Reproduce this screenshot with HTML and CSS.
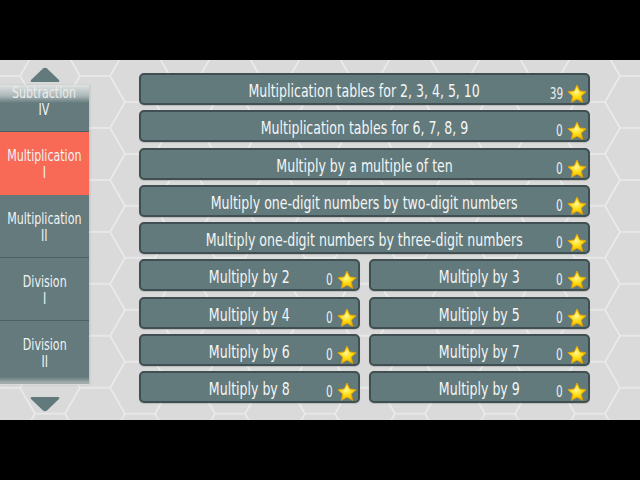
FILE: index.html
```html
<!DOCTYPE html>
<html>
<head>
<meta charset="utf-8">
<link rel="stylesheet" href="styles.css">
</head>
<body>
<div class="bar"></div>
<div class="screen">
  <svg class="hexbg" width="640" height="360" aria-hidden="true">
    <defs>
      <pattern id="hex" width="90" height="51.96" patternUnits="userSpaceOnUse" x="20" y="-10">
        <path d="M0 25.98 L15 0 L45 0 L60 25.98 L45 51.96 L15 51.96 Z M60 25.98 L90 25.98" fill="none" stroke="#ebebeb" stroke-width="1.6"/>
      </pattern>
    </defs>
    <rect width="640" height="360" fill="url(#hex)"/>
  </svg>
  <aside class="side">
    <div class="arrow up"><svg width="30" height="16" viewBox="0 0 30 16"><path d="M13 1.5 Q15 0 17 1.5 L29 13 Q30 15 28 15 L2 15 Q0 15 1 13 Z" fill="#627a7c"/></svg></div>
    <div class="viewport">
      <div class="tabs">
        <div class="tab"><span class="tt">Subtraction<br>IV</span></div>
        <div class="tab active"><span class="tt">Multiplication<br>I</span></div>
        <div class="tab"><span class="tt">Multiplication<br>II</span></div>
        <div class="tab"><span class="tt">Division<br>I</span></div>
        <div class="tab"><span class="tt">Division<br>II</span></div>
      </div>
    </div>
    <div class="arrow down"><svg width="30" height="16" viewBox="0 0 30 16"><path d="M13 14.5 Q15 16 17 14.5 L29 3 Q30 1 28 1 L2 1 Q0 1 1 3 Z" fill="#627a7c"/></svg></div>
  </aside>
  <main class="grid">
    <div class="btn wide"><span class="label">Multiplication tables for 2, 3, 4, 5, 10</span><span class="score"><span class="num">39</span><svg class="star" viewBox="0 0 20 20"><use href="#starshape"/></svg></span></div>
    <div class="btn wide"><span class="label">Multiplication tables for 6, 7, 8, 9</span><span class="score"><span class="num">0</span><svg class="star" viewBox="0 0 20 20"><use href="#starshape"/></svg></span></div>
    <div class="btn wide"><span class="label">Multiply by a multiple of ten</span><span class="score"><span class="num">0</span><svg class="star" viewBox="0 0 20 20"><use href="#starshape"/></svg></span></div>
    <div class="btn wide"><span class="label">Multiply one-digit numbers by two-digit numbers</span><span class="score"><span class="num">0</span><svg class="star" viewBox="0 0 20 20"><use href="#starshape"/></svg></span></div>
    <div class="btn wide"><span class="label">Multiply one-digit numbers by three-digit numbers</span><span class="score"><span class="num">0</span><svg class="star" viewBox="0 0 20 20"><use href="#starshape"/></svg></span></div>
    <div class="btn"><span class="label">Multiply by 2</span><span class="score"><span class="num">0</span><svg class="star" viewBox="0 0 20 20"><use href="#starshape"/></svg></span></div>
    <div class="btn"><span class="label">Multiply by 3</span><span class="score"><span class="num">0</span><svg class="star" viewBox="0 0 20 20"><use href="#starshape"/></svg></span></div>
    <div class="btn"><span class="label">Multiply by 4</span><span class="score"><span class="num">0</span><svg class="star" viewBox="0 0 20 20"><use href="#starshape"/></svg></span></div>
    <div class="btn"><span class="label">Multiply by 5</span><span class="score"><span class="num">0</span><svg class="star" viewBox="0 0 20 20"><use href="#starshape"/></svg></span></div>
    <div class="btn"><span class="label">Multiply by 6</span><span class="score"><span class="num">0</span><svg class="star" viewBox="0 0 20 20"><use href="#starshape"/></svg></span></div>
    <div class="btn"><span class="label">Multiply by 7</span><span class="score"><span class="num">0</span><svg class="star" viewBox="0 0 20 20"><use href="#starshape"/></svg></span></div>
    <div class="btn"><span class="label">Multiply by 8</span><span class="score"><span class="num">0</span><svg class="star" viewBox="0 0 20 20"><use href="#starshape"/></svg></span></div>
    <div class="btn"><span class="label">Multiply by 9</span><span class="score"><span class="num">0</span><svg class="star" viewBox="0 0 20 20"><use href="#starshape"/></svg></span></div>
  </main>
</div>
<div class="bar"></div>
<svg width="0" height="0" class="defs" aria-hidden="true">
  <defs>
    <radialGradient id="sg" cx="0.45" cy="0.4" r="0.6">
      <stop offset="0" stop-color="#fff6a0"/>
      <stop offset="0.45" stop-color="#ffe01a"/>
      <stop offset="1" stop-color="#f0b400"/>
    </radialGradient>
    <path id="starshape" d="M10 1 L12.7 6.88 L19.13 7.63 L14.37 12.02 L15.64 18.37 L10 15.2 L4.36 18.37 L5.63 12.02 L0.87 7.63 L7.3 6.88 Z" fill="url(#sg)" stroke="#e2a300" stroke-width="0.9" stroke-linejoin="round"/>
  </defs>
</svg>
</body>
</html>
```
FILE: styles.css
```css
html, body { margin: 0; padding: 0; background: #000; }
body { width: 640px; height: 480px; overflow: hidden; font-family: "DejaVu Sans Condensed", "DejaVu Sans", sans-serif; }
.bar { height: 60px; background: #000; }
.defs { position: absolute; }
.screen { position: relative; height: 360px; background: #dadada; display: flex; overflow: hidden; }
.hexbg { position: absolute; left: 0; top: 0; }
.side { position: relative; width: 89px; display: flex; flex-direction: column; align-items: center; }
.arrow { height: 16px; display: flex; justify-content: center; width: 89px; }
.arrow.up { margin-top: 7px; margin-bottom: 2px; }
.arrow.down { margin-top: 11px; }
.viewport { position: relative; width: 89px; height: 300px; overflow: hidden; box-shadow: 1px 0 2px rgba(0,0,0,0.12); }
.viewport::before, .viewport::after { content: ""; position: absolute; left: 0; right: 0; z-index: 2; }
.viewport::before { top: 0; height: 18px; background: linear-gradient(rgba(230,232,232,0.95), rgba(230,232,232,0.55) 60%, rgba(230,232,232,0)); }
.viewport::after { bottom: 0; height: 8px; background: linear-gradient(rgba(218,218,218,0), rgba(218,218,218,0.75)); }
.tabs { margin-top: -16px; }
.tab { box-sizing: border-box; height: 63px; padding-top: 4px; border-bottom: 1px solid #4d5f61; background: #647a7c; color: #f0f3f3; text-align: center; display: flex; align-items: center; justify-content: center; }
.tt { display: inline-block; font-size: 15px; line-height: 17px; transform: scaleX(0.82); white-space: nowrap; }
.tab.active { background: #f86a56; border-bottom-color: #f86a56; }
.grid { position: relative; margin: 13px 0 0 50px; width: 451px; display: grid; grid-template-columns: 221px 221px; column-gap: 9px; row-gap: 5.25px; grid-auto-rows: 32px; align-content: start; }
.btn { position: relative; box-sizing: border-box; padding-top: 4px; background: #627a7c; border: 2px solid #404f51; border-radius: 5px; color: #f4f6f6; display: flex; align-items: center; justify-content: center; box-shadow: 0 1px 1px rgba(0,0,0,0.15); }
.btn.wide { grid-column: 1 / 3; }
.label { display: inline-block; font-size: 17px; white-space: nowrap; transform: scaleX(0.82); }
.score { position: absolute; right: 1px; bottom: 0; display: flex; align-items: flex-end; color: #eceeee; }
.num { display: inline-block; font-size: 15px; line-height: 15px; transform: scaleX(0.78); transform-origin: right bottom; margin-bottom: 1px; }
.score .star { width: 20px; height: 20px; margin-left: 4px; margin-bottom: -1px; }
```
